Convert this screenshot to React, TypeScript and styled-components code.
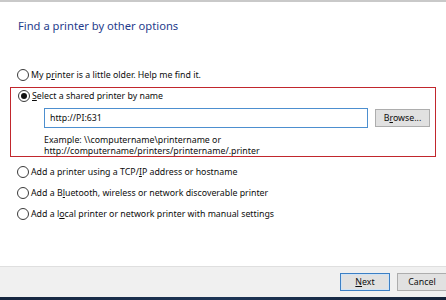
import * as React from "react";
import styled, { createGlobalStyle } from "styled-components";

const GlobalStyle = createGlobalStyle`
  html, body {
    margin: 0;
    padding: 0;
    background: #ffffff;
  }
  body {
    font-family: "Noto Sans", "Open Sans", sans-serif;
  }
`;

interface IOption {
  key: string;
  before: string;
  accel: string;
  after: string;
}

const options: IOption[] = [
  { key: "older", before: "My p", accel: "r", after: "inter is a little older. Help me find it." },
  { key: "tcp", before: "Add a printer using a TCP/", accel: "I", after: "P address or hostname" },
  { key: "bt", before: "Add a B", accel: "l", after: "uetooth, wireless or network discoverable printer" },
  { key: "local", before: "Add a l", accel: "o", after: "cal printer or network printer with manual settings" }
];

export default function App() {
  const [selected, setSelected] = React.useState("shared");
  const [path, setPath] = React.useState("http://PI:631");

  const renderOption = (o: IOption) => (
    <OptionRow key={o.key} onClick={() => setSelected(o.key)}>
      <Radio checked={selected === o.key} />
      <span>
        {o.before}
        <Accel>{o.accel}</Accel>
        {o.after}
      </span>
    </OptionRow>
  );

  return (
    <Window>
      <GlobalStyle />
      <Content>
        <Title>Find a printer by other options</Title>
        <Options>
          {renderOption(options[0])}
          <SharedBox>
            <OptionRow onClick={() => setSelected("shared")}>
              <Radio checked={selected === "shared"} />
              <span>
                <Accel>S</Accel>elect a shared printer by name
              </span>
            </OptionRow>
            <PathRow>
              <PathInput value={path} onChange={(e) => setPath(e.target.value)} />
              <Button wide={55}>
                B<Accel>r</Accel>owse...
              </Button>
            </PathRow>
            <Hint>
              Example: \\computername\printername or
              <br />
              http://computername/printers/printername/.printer
            </Hint>
          </SharedBox>
          <Rest>{options.slice(1).map(renderOption)}</Rest>
        </Options>
      </Content>
      <Footer>
        <Button primary={true} wide={50}>
          <Accel>N</Accel>ext
        </Button>
        <Button wide={50}>Cancel</Button>
      </Footer>
      <Taskbar />
    </Window>
  );
}

const Window = styled.div`
  width: 446px;
  height: 300px;
  display: flex;
  flex-direction: column;
  border-top: 2px solid #c9c9c9;
  box-sizing: border-box;
  overflow: hidden;
  color: #0d0d0d;
  font-size: 8.8px;
`;

const Content = styled.div`
  flex: 1;
  padding: 16px 10px 0 10px;
`;

const Title = styled.div`
  font-size: 11.2px;
  line-height: 16px;
  color: #1f3c8c;
  margin-left: 8px;
`;

const Options = styled.div`
  margin-top: 34px;
  display: flex;
  flex-direction: column;
`;

const OptionRow = styled.label`
  display: flex;
  align-items: center;
  gap: 2px;
  height: 14px;
  padding-left: 7px;
  cursor: default;
  white-space: nowrap;
`;

const Accel = styled.span`
  text-decoration: underline;
`;

const Radio = styled.span<{ checked?: boolean }>`
  width: 10px;
  height: 10px;
  border: 1px solid #3a3a3a;
  border-radius: 50%;
  background: #fff;
  display: flex;
  align-items: center;
  justify-content: center;
  flex-shrink: 0;

  &::after {
    content: "";
    width: 6px;
    height: 6px;
    border-radius: 50%;
    background: ${(p) => (p.checked ? "#111" : "transparent")};
  }
`;

const SharedBox = styled.div`
  margin-top: 5px;
  width: 426px;
  height: 70px;
  box-sizing: border-box;
  border: 1px solid #c1272d;
  padding-top: 1px;
`;

const PathRow = styled.div`
  display: flex;
  align-items: center;
  gap: 7px;
  margin: 5px 0 0 33px;
`;

const PathInput = styled.input`
  width: 324px;
  height: 20px;
  box-sizing: border-box;
  border: 1px solid #4d8fcf;
  padding: 0 5px;
  font-family: inherit;
  font-size: 8.8px;
  color: #0d0d0d;
  outline: none;
`;

const Button = styled.button<{ primary?: boolean; wide?: number }>`
  width: ${(p) => p.wide || 56}px;
  height: 18px;
  box-sizing: border-box;
  padding: 0;
  font-family: inherit;
  font-size: 8.8px;
  color: #0d0d0d;
  background: #e1e1e1;
  border: 1px solid ${(p) => (p.primary ? "#3c7fc4" : "#adadad")};
  box-shadow: ${(p) => (p.primary ? "inset 0 0 0 1px #d0e3f5" : "none")};
`;

const Hint = styled.div`
  margin: 7px 0 0 33px;
  line-height: 11px;
`;

const Rest = styled.div`
  margin-top: 8px;
  display: flex;
  flex-direction: column;
  gap: 7px;
`;

const Footer = styled.div`
  height: 31px;
  flex-shrink: 0;
  box-sizing: border-box;
  border-top: 1px solid #dfdfdf;
  background: #f0f0f0;
  display: flex;
  align-items: center;
  justify-content: flex-end;
  gap: 7px;
  margin-right: -1px;
`;

const Taskbar = styled.div`
  height: 3px;
  flex-shrink: 0;
  background: linear-gradient(90deg, #16263f, #1d3556 50%, #142238);
`;
